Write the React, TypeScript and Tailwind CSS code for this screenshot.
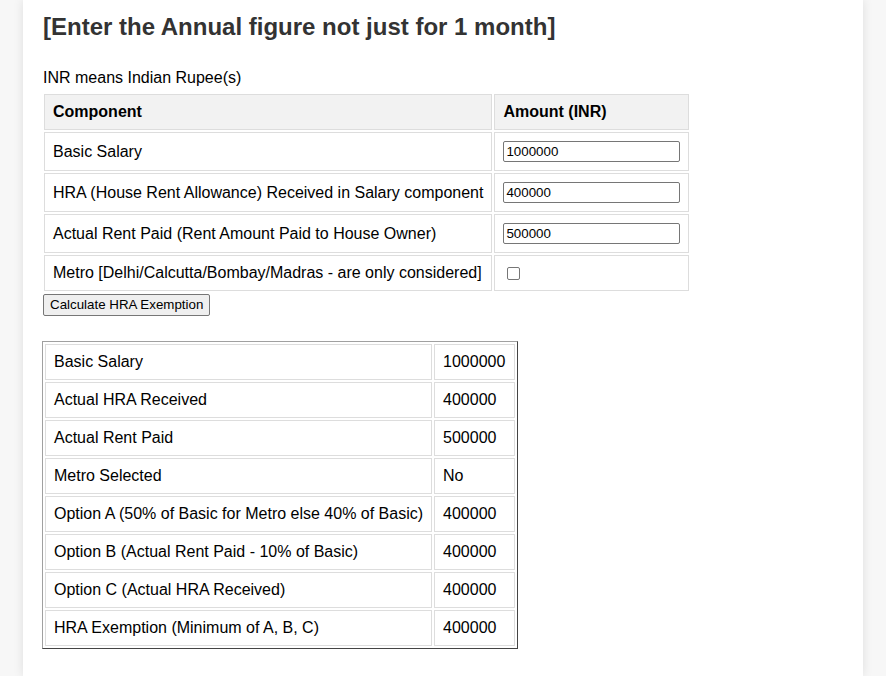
import React from "react";

const inputRows = [
  { label: "Basic Salary", value: "1000000" },
  { label: "HRA (House Rent Allowance) Received in Salary component", value: "400000" },
  { label: "Actual Rent Paid (Rent Amount Paid to House Owner)", value: "500000" },
];

const results = [
  ["Basic Salary", "1000000"],
  ["Actual HRA Received", "400000"],
  ["Actual Rent Paid", "500000"],
  ["Metro Selected", "No"],
  ["Option A (50% of Basic for Metro else 40% of Basic)", "400000"],
  ["Option B (Actual Rent Paid - 10% of Basic)", "400000"],
  ["Option C (Actual HRA Received)", "400000"],
  ["HRA Exemption (Minimum of A, B, C)", "400000"],
];

const cell = "border border-[#ddd] px-2 py-2 text-left align-middle whitespace-nowrap leading-[18px]";

export default function App() {
  return (
    <div className="min-h-[676px] bg-[#f7f7f7] font-['Liberation_Sans',Arial,sans-serif] text-[16px] text-black">
      <div className="mx-auto w-[840px] min-h-[676px] bg-white px-5 pt-[13px] shadow-[0_0_10px_rgba(0,0,0,0.1)]">
        <h2 className="text-[24px] font-bold leading-[28px] text-[#333]">
          [Enter the Annual figure not just for 1 month]
        </h2>
        <p className="mt-[28px] leading-[18px]">INR means Indian Rupee(s)</p>

        <table className="mt-[5px] border-separate border-spacing-[2px] -ml-[1px]">
          <thead>
            <tr>
              <th className={`${cell} w-[447px] bg-[#f2f2f2] font-bold`}>Component</th>
              <th className={`${cell} w-[195px] bg-[#f2f2f2] font-bold`}>Amount (INR)</th>
            </tr>
          </thead>
          <tbody>
            {inputRows.map((r) => (
              <tr key={r.label}>
                <td className={cell}>{r.label}</td>
                <td className={cell}>
                  <input
                    type="text"
                    defaultValue={r.value}
                    className="block w-[177px] rounded-[2px] border border-[#767676] bg-white px-[2px] py-[1px] text-[13.33px] leading-[17px] text-black"
                  />
                </td>
              </tr>
            ))}
            <tr>
              <td className={cell}>Metro [Delhi/Calcutta/Bombay/Madras - are only considered]</td>
              <td className={cell}>
                <input
                  type="checkbox"
                  className="ml-[4px] block h-[13px] w-[13px] appearance-none rounded-[2px] border border-[#767676] bg-white"
                />
              </td>
            </tr>
          </tbody>
        </table>

        <button className="mt-[1px] block rounded-[2px] border border-[#767676] bg-[#efefef] px-[6px] py-[1px] text-[13.33px] leading-[18px] text-black">
          Calculate HRA Exemption
        </button>

        <table className="mt-[25px] -ml-[1px] border-separate border-spacing-[2px] border border-t-[#a0a0a0] border-l-[#a0a0a0] border-r-[#444] border-b-[#444]">
          <tbody>
            {results.map(([k, v]) => (
              <tr key={k}>
                <td className={`${cell} w-[386px]`}>{k}</td>
                <td className={`${cell} w-[81px]`}>{v}</td>
              </tr>
            ))}
          </tbody>
        </table>
      </div>
    </div>
  );
}
